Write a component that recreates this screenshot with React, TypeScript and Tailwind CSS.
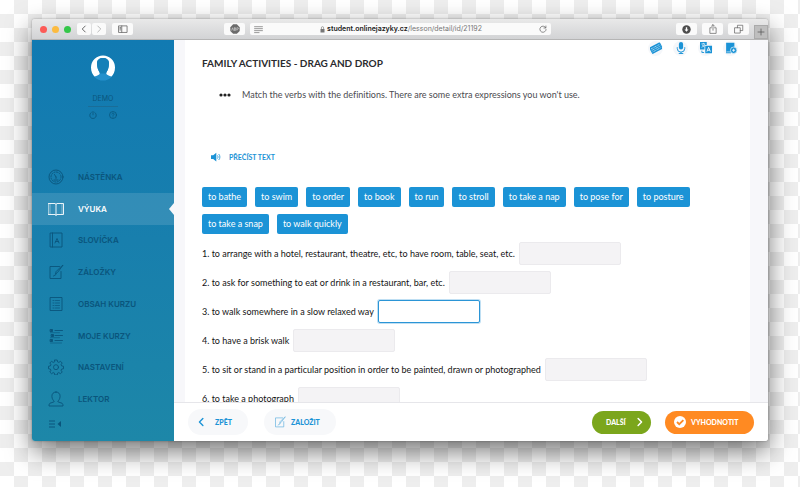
import { useState, type ReactNode } from "react";
import clsx from "clsx";

const verbs = [
  "to bathe",
  "to swim",
  "to order",
  "to book",
  "to run",
  "to stroll",
  "to take a nap",
  "to pose for",
  "to posture",
  "to take a snap",
  "to walk quickly",
];

const questions = [
  "1. to arrange with a hotel, restaurant, theatre, etc, to have room, table, seat, etc.",
  "2. to ask for something to eat or drink in a restaurant, bar, etc.",
  "3. to walk somewhere in a slow relaxed way",
  "4. to have a brisk walk",
  "5. to sit or stand in a particular position in order to be painted, drawn or photographed",
  "6. to take a photograph",
];

type IconProps = { className?: string; children: ReactNode };

// Thin outline icon on a 16px grid
function Icon({ className, children }: IconProps) {
  return (
    <svg
      viewBox="0 0 16 16"
      fill="none"
      stroke="currentColor"
      strokeWidth="0.9"
      strokeLinecap="round"
      strokeLinejoin="round"
      className={clsx("shrink-0", className)}
      aria-hidden="true"
    >
      {children}
    </svg>
  );
}

const noteShape = (
  <>
    <path d="M11.5 2.5H2v12h11V7.5" />
    <path d="M14.8 1.5 9.5 8.5l-2 1.5.6-2.4L13.5 2.2z M8 10.5 5.5 12" />
  </>
);

const menu: { label: string; icon: ReactNode }[] = [
  {
    label: "NÁSTĚNKA",
    icon: (
      <>
        <circle cx="8" cy="8" r="7" />
        <circle cx="8" cy="8" r="5" strokeDasharray="1.2 1.4" />
        <path d="M8 8 6.5 5.5M8 8v1.5M6 11h4" />
      </>
    ),
  },
  {
    label: "VÝUKA",
    icon: (
      <>
        <path d="M0.5 2.5h6.5l1 .8 1-.8h6.5v11H9l-1 .8-1-.8H.5zM8 3.3v11" />
        <path d="M2 2.5v11M14 2.5v11" strokeWidth="0.4" />
      </>
    ),
  },
  {
    label: "SLOVÍČKA",
    icon: (
      <>
        <path d="M2.5 1h11.5v14H2.5zM4.5 1v14" />
        <path d="M7 11l2-4.5L11 11M7.6 9.5h2.8" />
      </>
    ),
  },
  { label: "ZÁLOŽKY", icon: noteShape },
  {
    label: "OBSAH KURZU",
    icon: (
      <>
        <path d="M2.5 1.5h11.5v13H2.5z" />
        <path d="M5 4.5h1M7.5 4.5h4M5 7h1M7.5 7h4M5 9.5h1M7.5 9.5h4M5 12h1M7.5 12h4" strokeWidth="0.7" />
      </>
    ),
  },
  {
    label: "MOJE KURZY",
    icon: (
      <>
        <path d="M7 2.5h7.5M7 7.5h7.5M7 12.5h7.5" />
        <path d="M2.500 4.700h9M2.500 9.700h9M2.500 15h11" strokeWidth="0.6" />
        <path d="M2.500 1.500h2v2h-2zM3.500 6.500h2v2h-2zM2.500 11.500h2v2h-2z" fill="currentColor" />
      </>
    ),
  },
  {
    label: "NASTAVENÍ",
    icon: (
      <>
        <path d="M6.8 1h2.4l.4 1.900 1.200.5 1.700-1.100 1.700 1.700-1.100 1.700.5 1.200 1.900.4v2.400l-1.900.4-.5 1.200 1.100 1.700-1.700 1.700-1.700-1.100-1.200.5-.4 1.900H6.800l-.4-1.900-1.200-.5-1.700 1.100-1.700-1.700 1.100-1.700-.5-1.200L.5 9.700V7.300l1.900-.4.5-1.200L1.800 4l1.700-1.700 1.700 1.100 1.200-.5z" />
        <circle cx="8" cy="8.2" r="2.500" />
      </>
    ),
  },
  {
    label: "LEKTOR",
    icon: (
      <path d="M8 1C5.300 1 3.700 3 3.900 5.500 4.100 8 5.300 9.600 6.200 10.200L5.800 11 2 12.200C1.200 12.800 1 13.500 1 15h14c0-1.500-.2-2.200-1-2.800L10.200 11l-.4-.8C10.700 9.600 11.900 8 12.100 5.500 12.300 3 10.700 1 8 1z" />
    ),
  },
];

function BarButton({ label, className, children }: { label: string; className: string; children: ReactNode }) {
  return (
    <button
      type="button"
      aria-label={label}
      className={clsx("flex h-3 shrink-0 items-center justify-center rounded-xs bg-[#fafafa]", className)}
    >
      {children}
    </button>
  );
}

function TitleBar() {
  return (
    <header className="flex h-[21px] shrink-0 items-center border-b border-[#b5b5b5] bg-linear-to-b from-[#e9e9e9] to-[#d2d3d5] pl-2 text-[#6a6a6a]">
      <div className="flex gap-[5px]">
        <span className="size-[7px] rounded-full bg-[#fc5b57]" />
        <span className="size-[7px] rounded-full bg-[#fcbb40]" />
        <span className="size-[7px] rounded-full bg-[#34c749]" />
      </div>

      <div className="ml-1.5 flex gap-px">
        <BarButton label="Back" className="w-[14px]">
          <Icon className="size-2">
            <path d="M10.500 2 4.500 8l6 6" strokeWidth="2" />
          </Icon>
        </BarButton>
        <BarButton label="Forward" className="w-[14px] text-[#b8b8b8]">
          <Icon className="size-2">
            <path d="M5.500 2l6 6-6 6" strokeWidth="2" />
          </Icon>
        </BarButton>
      </div>
      <BarButton label="Sidebar" className="ml-1.5 w-[21px]">
        <Icon className="size-[10px]">
          <path d="M1.500 3h13v10.500h-13zM6 3v10.500M3 5.500h1.500M3 7.500h1.500M3 9.500h1.500" strokeWidth="1.300" />
        </Icon>
      </BarButton>

      <BarButton label="Adblock" className="ml-[91px] w-[21px]">
        <svg viewBox="0 0 16 16" className="size-[10px]" aria-hidden="true">
          <path d="M5 .5h6L15.500 5v6L11 15.500H5L.5 11V5z" fill="#6b6b6b" />
          <path
            d="M2.500 10.500 4 6l1.500 4.500M6.800 5.800v4.600h1.400a1.200 1.200 0 0 0 0-2.400H6.800h1.200a1.100 1.100 0 0 0 0-2.200zM11 10.500V5.800h1.200a1.300 1.300 0 0 1 0 2.600H11"
            fill="none"
            stroke="#ddd"
            strokeWidth=".9"
          />
        </svg>
      </BarButton>

      <div className="ml-[5px] flex h-3 min-w-0 flex-1 items-center rounded-xs bg-[#fafafa] pr-1 pl-1">
        <Icon className="size-[9px]">
          <path d="M1 3h14M1 6.500h14M1 10h14M1 13.500h8" strokeWidth="1.200" />
        </Icon>
        <div className="flex min-w-0 flex-1 items-center justify-center gap-0.5 whitespace-nowrap font-[Inter,sans-serif] text-[7px] leading-3 text-[#777]">
          <svg viewBox="0 0 10 14" className="h-[7px] w-[5px] shrink-0" aria-hidden="true">
            <path d="M1 6h8v7H1z" fill="#777" />
            <path d="M2.800 6V3.500a2.200 2.200 0 0 1 4.400 0V6" fill="none" stroke="#777" strokeWidth="1.300" />
          </svg>
          <span>
            <b className="font-semibold text-[#222]">student.onlinejazyky.cz</b>/lesson/detail/id/21192
          </span>
        </div>
        <Icon className="size-2">
          <path d="M13.500 5.500A6.200 6.200 0 1 0 14.200 9M13.800 2v4h-4" strokeWidth="1.500" />
        </Icon>
      </div>

      <div className="ml-[125px] flex gap-[5px]">
        <BarButton label="Downloads" className="w-[21px]">
          <svg viewBox="0 0 16 16" className="size-[9px]" aria-hidden="true">
            <circle cx="8" cy="8" r="7.500" fill="#4d4d4d" />
            <path d="M6.800 4h2.400v4h2.300L8 12 4.500 8h2.300z" fill="#fff" />
          </svg>
        </BarButton>
        <BarButton label="Share" className="w-[21px]">
          <Icon className="size-[10px]">
            <path d="M5.500 6H3v9h10V6h-2.500M8 10V1.200M5.500 3.500 8 1l2.500 2.500" strokeWidth="1.200" />
          </Icon>
        </BarButton>
        <BarButton label="Tabs" className="w-[21px]">
          <Icon className="size-[10px]">
            <path d="M1.500 6h8.500v8.500H1.500zM5.500 6V2H14v8.500h-4" strokeWidth="1.200" />
          </Icon>
        </BarButton>
      </div>
      <button
        type="button"
        aria-label="New tab"
        className="ml-[5px] flex h-[14px] w-[14px] shrink-0 items-center justify-center self-end border border-[#aaa] bg-[#bebebe] text-[#555]"
      >
        <Icon className="size-2">
          <path d="M8 2v12M2 8h12" strokeWidth="1.500" />
        </Icon>
      </button>
    </header>
  );
}

function Sidebar() {
  const [active, setActive] = useState("VÝUKA");

  return (
    <aside className="flex w-[142px] shrink-0 flex-col bg-linear-to-b from-[#117ab2] via-[#187fad] to-[#1d87a8] font-[Inter,sans-serif] text-[#0a557c]">
      <div className="flex h-[121px] flex-col items-center pt-[15px]">
        <svg viewBox="0 0 24 26" className="h-[26px] w-6" aria-hidden="true">
          <circle cx="12" cy="14" r="11.500" fill="#2490cc" />
          <path
            d="M12 .5a12 12 0 0 0-12 12c0 4 1.500 7 3.500 9 2.300-.6 5-1.500 5.300-3 .2-1-.9-2-1.500-3.500C6.300 12.500 6 10.500 6 8c0-3 2.500-5 6-5s6 2 6 5c0 2.500-.3 4.500-1.300 7-.6 1.500-1.700 2.500-1.500 3.500.3 1.500 3 2.400 5.300 3 2-2 3.500-5 3.500-9a12 12 0 0 0-12-12z"
            fill="#fff"
          />
          <path
            d="M12 3c-3.500 0-6 2-6 5 0 2.500.3 4.500 1.300 7 .6 1.500 1.700 2.500 1.500 3.500h6.400c-.2-1 .9-2 1.500-3.500 1-2.500 1.300-4.500 1.300-7 0-3-2.500-5-6-5z"
            fill="#1580b8"
          />
        </svg>
        <span className="mt-3 text-[7px] leading-3">DEMO</span>
        <span className="mt-px h-px w-[30px] bg-[#1a6d98]" />
        <div className="mt-1 flex gap-3">
          <button type="button" aria-label="Odhlásit">
            <Icon className="size-2">
              <path d="M8 1v6.500M4.500 3a6.500 6.500 0 1 0 7 0" strokeWidth="1.600" />
            </Icon>
          </button>
          <button type="button" aria-label="Nápověda">
            <Icon className="size-2">
              <circle cx="8" cy="8" r="7" strokeWidth="1.500" />
              <path d="M5.800 6.200C6 3.500 10.300 3.800 10 6.300c-.2 1.500-2 1.500-2 3.200M8 12v.2" strokeWidth="1.500" />
            </Icon>
          </button>
        </div>
      </div>

      <nav className="grid flex-1 auto-rows-fr">
        {menu.map(({ label, icon }) => (
          <a
            key={label}
            href="#"
            onClick={() => setActive(label)}
            className={clsx(
              "relative flex items-center gap-[14px] pl-4 text-[8px] font-semibold leading-3",
              label === active && "bg-white/12 text-white",
            )}
          >
            <Icon className="size-4">{icon}</Icon>
            {label}
            {label === active && (
              <svg viewBox="0 0 5 12" className="absolute right-0 h-3 w-[5px]" aria-hidden="true">
                <path d="M5 0v12L0 6z" fill="#f7f7fa" />
              </svg>
            )}
          </a>
        ))}
      </nav>

      <button type="button" aria-label="Sbalit menu" className="flex h-[26px] items-center pl-4 pb-2">
        <svg viewBox="0 0 14 8" className="h-2 w-[14px]" aria-hidden="true">
          <path d="M1 1h6M1 4h6M1 7h6" stroke="currentColor" strokeWidth="1" />
          <path d="M13 1v6L9.500 4z" fill="currentColor" />
        </svg>
      </button>
    </aside>
  );
}

function ToolButton({ label, children }: { label: string; children: ReactNode }) {
  return (
    <button
      type="button"
      aria-label={label}
      className="flex size-[15px] items-center justify-center rounded-full bg-[#f5f7fa]"
    >
      <svg viewBox="0 0 16 16" className="size-3" aria-hidden="true">
        {children}
      </svg>
    </button>
  );
}

function Toolbar() {
  return (
    <div className="flex h-4 items-center justify-end gap-[10px] text-[#1b93d6]">
      <ToolButton label="Klávesnice">
        <g transform="rotate(-28 8 8)">
          <rect x="0" y="3.500" width="16" height="9.500" rx="1" fill="currentColor" />
          <path d="M1.500 6h13M1.500 8.300h13M1.500 10.600h13" stroke="#fff" strokeWidth=".8" strokeDasharray="1.300 .8" />
        </g>
      </ToolButton>
      <ToolButton label="Nahrávání">
        <rect x="5.200" y="0" width="5.600" height="10" rx="2.800" fill="currentColor" />
        <path d="M3 7v1.500a5 5 0 0 0 10 0V7M8 13.500v2M5 15.400h6" fill="none" stroke="currentColor" strokeWidth="1.300" />
      </ToolButton>
      <ToolButton label="Překlad">
        <path d="M0 0h9v4H6v6H0z" fill="currentColor" />
        <path d="M2 2.500h5M4.500 1.200v1.300M6 3c-.6 2-2 3.300-4 4M3 3.500c.6 1.500 1.500 2.500 2.500 3" fill="none" stroke="#fff" strokeWidth=".9" />
        <path d="M7 5h9v10H7z" fill="currentColor" />
        <path d="M9.200 12.800 11.500 7l2.300 5.800M10 11h3" fill="none" stroke="#fff" strokeWidth="1.200" />
        <path d="M2.500 11.500v2.500h3" fill="none" stroke="currentColor" strokeWidth="1.200" />
      </ToolButton>
      <ToolButton label="Přidat do slovníčku">
        <path d="M1.500 1h11v6.500H8V15H1.500z" fill="currentColor" />
        <path d="M2 13.200h6" stroke="#fff" strokeWidth=".8" />
        <circle cx="11.500" cy="11" r="4.300" fill="currentColor" stroke="#fff" strokeWidth=".8" />
        <path d="M11.500 9v4M9.500 11h4" stroke="#fff" strokeWidth="1.100" />
      </ToolButton>
    </div>
  );
}

function Lesson() {
  const [focused, setFocused] = useState(2);
  const [answers, setAnswers] = useState<string[]>(questions.map(() => ""));

  return (
    <main className="flex min-h-0 flex-1 bg-[#f7f7fa] pl-[11px] pr-[18px]">
      <div className="flex min-w-0 flex-1 flex-col bg-white pl-[17px] pr-3">
        <Toolbar />
        <h1 className="text-[10px] font-bold leading-[15px] text-[#2b2b2e]">FAMILY ACTIVITIES - DRAG AND DROP</h1>
        <div className="mt-4 flex items-center gap-[11px] pl-[17px] text-[9px] leading-4 text-[#4b4b50]">
          <svg viewBox="0 0 12 4" className="h-1 w-3 shrink-0" aria-hidden="true">
            <circle cx="2" cy="2" r="1.600" fill="#222" />
            <circle cx="6" cy="2" r="1.600" fill="#222" />
            <circle cx="10" cy="2" r="1.600" fill="#222" />
          </svg>
          <p>Match the verbs with the definitions. There are some extra expressions you won't use.</p>
        </div>

        <button
          type="button"
          className="mt-[46px] ml-[9px] flex items-center gap-2 self-start text-[7px] font-bold leading-4 text-[#1b93d6]"
        >
          <svg viewBox="0 0 16 16" className="size-[10px]" aria-hidden="true">
            <path d="M0 5h3.500L8.500 1v14l-5-4H0z" fill="currentColor" />
            <path d="M10.300 5.500c1.200 1.500 1.200 3.500 0 5M12.300 3.200c2.600 2.800 2.600 6.800 0 9.600" fill="none" stroke="currentColor" strokeWidth="1.300" />
          </svg>
          PŘEČÍST TEXT
        </button>

        <div className="mt-[22px] flex flex-wrap gap-x-2 gap-y-[7px]">
          {verbs.map((verb) => (
            <button
              key={verb}
              type="button"
              draggable
              className="h-5 rounded-xs bg-[#1b93d6] px-1.5 text-[9px] leading-5 text-white"
            >
              {verb}
            </button>
          ))}
        </div>

        <div className="mt-2 flex min-h-0 flex-1 flex-col gap-1.5 overflow-hidden">
          {questions.map((question, i) => (
            <label key={question} className="flex shrink-0 items-center gap-1 text-[9px] leading-3 text-[#141414]">
              {question}
              <input
                type="text"
                value={answers[i]}
                onFocus={() => setFocused(i)}
                onChange={(e) => setAnswers(answers.map((a, n) => (n === i ? e.target.value : a)))}
                className={clsx(
                  "h-[23px] w-[102px] rounded-xs border px-1 outline-none",
                  i === focused ? "border-[#2b95d6] bg-white ring-1 ring-[#2b95d6]/30" : "border-[#ebeaed] bg-[#f4f3f5]",
                )}
              />
            </label>
          ))}
        </div>
      </div>
    </main>
  );
}

function Footer() {
  return (
    <footer className="flex h-[39px] shrink-0 items-center border-t border-[#e6e6ea] bg-white px-[14px] text-[7px] font-black leading-3">
      <button type="button" className="flex h-[26px] w-[60px] items-center gap-[9px] rounded-full bg-[#f7f8fa] pl-2 text-[#1b93d6]">
        <Icon className="size-[10px]">
          <path d="M11 2.500 5.500 8l5.500 5.500" strokeWidth="2.200" />
        </Icon>
        ZPĚT
      </button>
      <button
        type="button"
        className="ml-4 flex h-[26px] w-[72px] items-center gap-[5px] rounded-full bg-[#f7f8fa] pl-[10px] text-[#1b93d6]"
      >
        <Icon className="size-3 text-[#5fb0de]">{noteShape}</Icon>
        ZALOŽIT
      </button>
      <button
        type="button"
        className="ml-auto flex h-[23px] w-[59px] items-center gap-[9px] rounded-full bg-[#7ba61c] pl-[14px] text-white"
      >
        DALŠÍ
        <Icon className="size-[10px]">
          <path d="M5 2.500 10.500 8 5 13.500" strokeWidth="2.400" />
        </Icon>
      </button>
      <button
        type="button"
        className="ml-[14px] flex h-[23px] w-[89px] items-center gap-[5px] rounded-full bg-[#ff8a22] pl-[9px] text-white"
      >
        <svg viewBox="0 0 16 16" className="size-3 shrink-0" aria-hidden="true">
          <circle cx="8" cy="8" r="8" fill="#fff" />
          <path d="m4 8 3 3 5.500-5.500" fill="none" stroke="#ff8a22" strokeWidth="2.400" />
        </svg>
        VYHODNOTIT
      </button>
    </footer>
  );
}

export default function App() {
  return (
    <div className="flex h-screen bg-[repeating-conic-gradient(#eeeeee_0_25%,#ffffff_0_50%)] bg-[length:28px_28px] px-8 pt-[19px] pb-[46px] font-[Lato,sans-serif] [font-variant-ligatures:none]">
      <div className="flex min-w-0 flex-1 flex-col overflow-hidden rounded-[3px] shadow-[0_0_2px_rgba(0,0,0,0.35),0_10px_26px_rgba(0,0,0,0.55)]">
        <TitleBar />
        <div className="flex min-h-0 flex-1">
          <Sidebar />
          <div className="flex min-w-0 flex-1 flex-col">
            <Lesson />
            <Footer />
          </div>
        </div>
      </div>
    </div>
  );
}
